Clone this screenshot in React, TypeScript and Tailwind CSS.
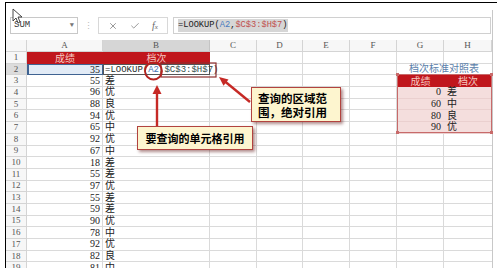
import { Check, X } from 'lucide-react';

const CELL_FONT = { fontFamily: '"Liberation Serif","Noto Sans CJK SC",serif' };
const MONO = { fontFamily: '"Liberation Mono","Noto Sans CJK SC",monospace' };
const CJK = { fontFamily: '"Noto Sans CJK SC",sans-serif' };

type Row = { n: number; a?: string; b?: string; g?: string; h?: string };

const rows: Row[] = [
  { n: 3, a: '55', b: '差' },
  { n: 4, a: '96', b: '优', g: '0', h: '差' },
  { n: 5, a: '88', b: '良', g: '60', h: '中' },
  { n: 6, a: '94', b: '优', g: '80', h: '良' },
  { n: 7, a: '65', b: '中', g: '90', h: '优' },
  { n: 8, a: '92', b: '优' },
  { n: 9, a: '67', b: '中' },
  { n: 10, a: '18', b: '差' },
  { n: 11, a: '55', b: '差' },
  { n: 12, a: '97', b: '优' },
  { n: 13, a: '55', b: '差' },
  { n: 14, a: '59', b: '差' },
  { n: 15, a: '90', b: '优' },
  { n: 16, a: '78', b: '中' },
  { n: 17, a: '92', b: '优' },
  { n: 18, a: '82', b: '良' },
  { n: 19, a: '81', b: '中' },
];

function RowHead({ n, active }: { n: number; active?: boolean }) {
  return (
    <div
      className={`flex w-[21px] shrink-0 items-center justify-center border-b border-r border-[#d4d4d4] text-[9px] text-[#555] ${
        active ? 'bg-[#dcdcdc]' : 'bg-[#f7f7f7]'
      }`}
      style={CELL_FONT}
    >
      {n}
    </div>
  );
}

// empty cells for C..F
function Blank() {
  return (
    <>
      <div className="w-[47px] shrink-0 border-b border-r border-[#dadada]" />
      <div className="w-[46px] shrink-0 border-b border-r border-[#dadada]" />
      <div className="w-[47px] shrink-0 border-b border-r border-[#dadada]" />
      <div className="w-[47px] shrink-0 border-b border-r border-[#dadada]" />
    </>
  );
}

function DataRow({ r }: { r: Row }) {
  const inTable = r.g !== undefined;
  return (
    <div className="flex h-[11.7px] text-[10px] leading-none text-[#222]" style={CELL_FONT}>
      <RowHead n={r.n} />
      <div className="flex w-[76px] shrink-0 items-center justify-end border-b border-r border-[#dadada] pr-[2px]">{r.a}</div>
      <div className="flex w-[107px] shrink-0 items-center border-b border-r border-[#dadada] pl-[2px]">{r.b}</div>
      <Blank />
      {inTable ? (
        <>
          <div className="flex w-[47px] shrink-0 items-center justify-end border-b border-[#ead0cf] bg-[#f4dedd] pr-[3px]">{r.g}</div>
          <div className="flex w-[48px] shrink-0 items-center border-b border-[#ead0cf] bg-[#f4dedd] pl-[3px]">{r.h}</div>
        </>
      ) : (
        <>
          <div className="w-[47px] shrink-0 border-b border-r border-[#dadada]" />
          <div className="w-[48px] shrink-0 border-b border-[#dadada]" />
        </>
      )}
    </div>
  );
}

export default function App() {
  return (
    <div className="relative h-[268px] w-[500px] overflow-hidden bg-white">
      <div className="ml-[5px] mt-[2px] h-[266px] w-[492px] border-l border-t border-black">
        {/* Formula bar */}
        <div className="flex h-[32px] items-end pb-[1px]">
          <div className="ml-[4px] flex h-[17px] w-[68px] items-center justify-between border border-[#c8c8c8] px-[3px] text-[9px] text-[#333]" style={MONO}>
            <span>SUM</span>
            <span className="text-[7px] text-[#777]">▼</span>
          </div>
          <div className="flex h-[17px] w-[20px] items-center justify-center text-[9px] text-[#bbb]">⋮</div>
          <div className="flex h-[17px] w-[70px] items-center justify-around border border-[#d8d8d8] px-[3px] text-[#666]">
            <X size={10} strokeWidth={1.6} />
            <Check size={10} strokeWidth={1.6} />
            <span className="text-[10px] italic" style={{ fontFamily: '"Liberation Serif",serif' }}>
              f<span className="text-[7px]">x</span>
            </span>
          </div>
          <div className="ml-[5px] flex h-[17px] w-[318px] items-center border border-[#d0d0d0] pl-[4px] text-[8.7px]" style={MONO}>
            <span className="bg-[#d6d6d6] text-[#222]">
              =LOOKUP(<span className="text-[#4a7cc0]">A2</span>,<span className="text-[#c0504d]">$C$3:$H$7</span>)
            </span>
          </div>
        </div>

        {/* Column headers */}
        <div className="mt-[5px] flex h-[12px] text-[9px] leading-none text-[#555]" style={CELL_FONT}>
          <div className="w-[21px] shrink-0 border-b border-r border-[#d4d4d4] bg-[#f7f7f7]" />
          <div className="flex w-[76px] shrink-0 items-center justify-center border-b border-r border-[#d4d4d4] bg-[#f7f7f7]">A</div>
          <div className="flex w-[107px] shrink-0 items-center justify-center border-b border-r border-[#c4c4c4] bg-[#d6d6d6]">B</div>
          <div className="flex w-[47px] shrink-0 items-center justify-center border-b border-r border-[#d4d4d4] bg-[#f7f7f7]">C</div>
          <div className="flex w-[46px] shrink-0 items-center justify-center border-b border-r border-[#d4d4d4] bg-[#f7f7f7]">D</div>
          <div className="flex w-[47px] shrink-0 items-center justify-center border-b border-r border-[#d4d4d4] bg-[#f7f7f7]">E</div>
          <div className="flex w-[47px] shrink-0 items-center justify-center border-b border-r border-[#d4d4d4] bg-[#f7f7f7]">F</div>
          <div className="flex w-[47px] shrink-0 items-center justify-center border-b border-r border-[#d4d4d4] bg-[#f7f7f7]">G</div>
          <div className="flex w-[48px] shrink-0 items-center justify-center border-b border-r border-[#d4d4d4] bg-[#f7f7f7]">H</div>
        </div>

        {/* Row 1 */}
        <div className="flex h-[11.7px] text-[10px] leading-none" style={CJK}>
          <RowHead n={1} />
          <div className="flex w-[76px] shrink-0 items-center justify-center bg-[#c0161c] text-[#f6c8c0]">成绩</div>
          <div className="flex w-[107px] shrink-0 items-center justify-center bg-[#c0161c] text-[#f6c8c0]">档次</div>
          <Blank />
          <div className="w-[47px] shrink-0 border-b border-r border-[#dadada]" />
          <div className="w-[48px] shrink-0 border-b border-[#dadada]" />
        </div>

        {/* Row 2 */}
        <div className="flex h-[11.7px] text-[10px] leading-none text-[#222]" style={CELL_FONT}>
          <RowHead n={2} active />
          <div className="flex w-[76px] shrink-0 items-center justify-end border border-l-2 border-[#3f6392] bg-[#e2ebf6] pr-[2px]">35</div>
          <div className="relative w-[107px] shrink-0 border border-[#555]">
            <span className="absolute left-[1px] top-[1px] whitespace-nowrap text-[9px] text-[#1e2a2a]" style={MONO}>
              =LOOKUP(<span className="text-[#3f6fb0]">A2</span>,<span className="text-[#2f4a48]">$C$3:$H$7</span>)
            </span>
          </div>
          <Blank />
          <div className="relative w-[95px] shrink-0 border-b border-[#dadada]">
            <span className="absolute -top-[1px] left-[12px] whitespace-nowrap text-[10px] text-[#5a80aa]" style={CJK}>
              档次标准对照表
            </span>
          </div>
        </div>

        {/* Row 3 */}
        <div className="flex h-[11.7px] text-[10px] leading-none text-[#222]" style={CELL_FONT}>
          <RowHead n={3} />
          <div className="flex w-[76px] shrink-0 items-center justify-end border-b border-r border-[#dadada] pr-[2px]">55</div>
          <div className="flex w-[107px] shrink-0 items-center border-b border-r border-[#dadada] pl-[2px]">差</div>
          <Blank />
          <div className="flex w-[47px] shrink-0 items-center justify-center bg-[#c0161c] text-[#f6c8c0]" style={CJK}>成绩</div>
          <div className="flex w-[48px] shrink-0 items-center justify-center bg-[#c0161c] text-[#f6c8c0]" style={CJK}>档次</div>
        </div>

        {rows.slice(1).map((r) => (
          <DataRow key={r.n} r={r} />
        ))}
      </div>

      {/* right edge line */}
      <div className="absolute right-[7px] top-[10px] h-[258px] w-px bg-[#c8c8c8]" />

      {/* range highlight on right table */}
      <div className="absolute left-[397px] top-[74px] h-[59px] w-[95px] border border-[#c86a6a]">
        <span className="absolute -left-[2px] -top-[2px] h-[3px] w-[3px] bg-[#c86a6a]" />
        <span className="absolute -right-[2px] -top-[2px] h-[3px] w-[3px] bg-[#c86a6a]" />
        <span className="absolute -bottom-[2px] -left-[2px] h-[3px] w-[3px] bg-[#c86a6a]" />
        <span className="absolute -bottom-[2px] -right-[2px] h-[3px] w-[3px] bg-[#c86a6a]" />
      </div>

      {/* mouse pointer */}
      <svg className="absolute left-[12px] top-[8px]" width="11" height="16" viewBox="0 0 11 16">
        <path d="M1 1 L1 13 L4 10 L6 15 L8 14 L6 9 L10 9 Z" fill="#fff" stroke="#333" strokeWidth="0.9" strokeLinejoin="round" />
      </svg>

      {/* annotations */}
      <svg className="pointer-events-none absolute left-0 top-0" width="500" height="268">
        <rect x="161" y="63" width="55" height="14" fill="none" stroke="#8e2f2f" strokeWidth="1.2" />
        <ellipse cx="153.5" cy="71" rx="8.5" ry="8.5" fill="none" stroke="#b3221f" strokeWidth="1.8" />
        <line x1="157" y1="126" x2="157" y2="92" stroke="#c62a26" strokeWidth="2.4" />
        <polygon points="157,85 152.5,94 161.5,94" fill="#c62a26" />
        <line x1="250" y1="102" x2="225" y2="81.5" stroke="#c62a26" strokeWidth="2.4" />
        <polygon points="219,77 223.5,85.8 228.5,79.6" fill="#c62a26" />
      </svg>

      <div
        className="absolute left-[137px] top-[126px] flex h-[24px] w-[116px] items-center justify-center border-[1.5px] border-[#b2433f] bg-[#fdf5cf] text-[11px] font-bold text-black shadow-[2px_2px_3px_rgba(80,0,0,0.45)]"
        style={CJK}
      >
        要查询的单元格引用
      </div>
      <div
        className="absolute left-[251px] top-[87px] flex h-[35px] w-[90px] flex-col justify-center border-[1.5px] border-[#b2433f] bg-[#fdf5cf] pl-[6px] text-[11.5px] font-bold leading-[14px] text-black shadow-[2px_2px_3px_rgba(80,0,0,0.45)]"
        style={CJK}
      >
        <span>查询的区域范</span>
        <span>围，绝对引用</span>
      </div>
    </div>
  );
}
